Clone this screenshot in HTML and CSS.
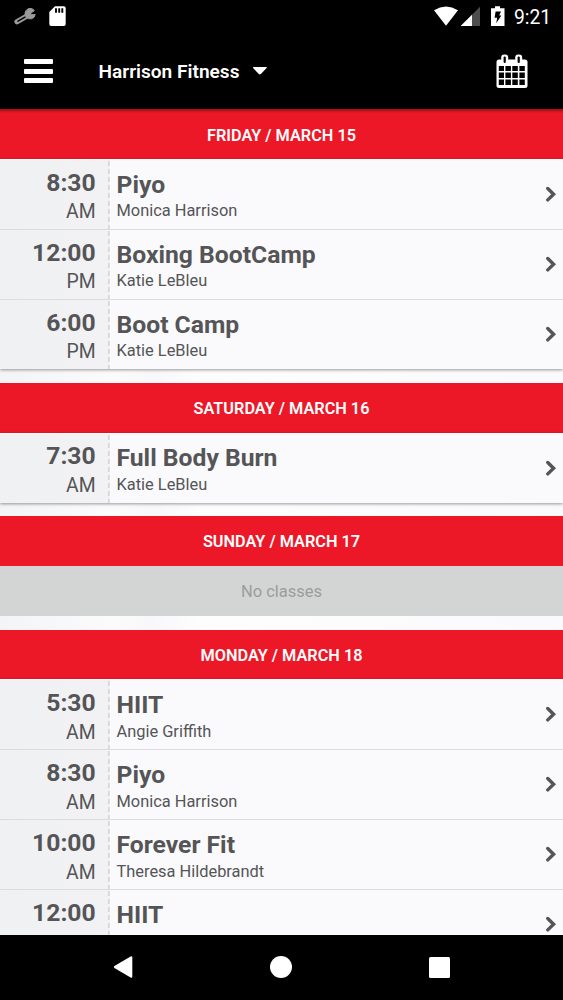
FILE: index.html
```
<!DOCTYPE html>
<html lang="en">
<head>
<meta charset="UTF-8">
<meta name="viewport" content="width=device-width, initial-scale=1.0">
<title>Harrison Fitness</title>
<link rel="stylesheet" href="styles.css">
</head>
<body>
    <!-- shared icon -->
    <svg class="defs" width="0" height="0">
        <symbol id="chevron" viewBox="0 0 12 16">
            <path d="M2.8 2.5L8.6 8.2L2.8 13.9" fill="none" stroke="#555557" stroke-width="3.4" stroke-linecap="round"/>
        </symbol>
    </svg>

    <div class="status-bar">
        <svg class="status-left" width="70" height="32" viewBox="0 0 70 32">
            <path d="M17 21.7L27 16" stroke="#9b9b9b" stroke-width="5.2" stroke-linecap="round"/>
            <path d="M34.4 10.6L30.7 13.2L31.2 14.7L35.2 14.5A5 5 0 0 1 26 16.6A5 5 0 0 1 34.4 10.6Z" fill="#9b9b9b" stroke="#9b9b9b" stroke-width="1" stroke-linejoin="round"/>
            <path d="M18 21.2L25 17.2" stroke="#000" stroke-width="1.5" stroke-linecap="round"/>
            <path d="M55 6.3H63.8Q65.7 6.3 65.7 8.2V24Q65.7 26 63.8 26H51.2Q49.3 26 49.3 24V12Z" fill="#fff"/>
            <path d="M56 8.3V12.7M59.2 8.3V12.7M62.3 8.3V12.7" stroke="#000" stroke-width="1.9"/>
        </svg>
        <svg class="status-right" width="74" height="32" viewBox="432 0 74 32">
            <path d="M434 10.2Q446 3 458 10.2L446 25.7Z" fill="#fff"/>
            <path d="M480 6.8V26H460.7Z" fill="#4d4d4d"/>
            <path d="M472 14.8V26H460.7Z" fill="#fff"/>
            <path d="M495 6.2H500V8.2H504.5V26H491V8.2H495Z" fill="#fff"/>
            <path d="M495.6 11.5H501L499.2 15.5H501.4L496.2 23.3L497.2 17.7H494.6Z" fill="#000"/>
        </svg>
        <span class="clock">9:21</span>
    </div>

    <header class="app-bar">
        <div class="menu"><span></span><span></span><span></span></div>
        <div class="location">Harrison Fitness
            <svg width="16" height="10" viewBox="0 0 16 10"><path d="M1.6 0H14.2Q15.2 .1 14.6 .9L8.9 7.1Q7.8 8 6.8 7.1L1.1 .9Q.6 .1 1.6 0Z" fill="#fff"/></svg>
        </div>
        <svg class="calendar" width="32" height="35" viewBox="0 0 32 35">
            <rect x=".5" y="5.5" width="31" height="28.5" rx="2.5" fill="#fff"/>
            <rect x="5.2" y=".6" width="7" height="10" rx="3" fill="#fff"/>
            <rect x="19.2" y=".6" width="7" height="10" rx="3" fill="#fff"/>
            <rect x="7.6" y="2.6" width="2.2" height="6.5" rx="1" fill="#000"/>
            <rect x="21.6" y="2.6" width="2.2" height="6.5" rx="1" fill="#000"/>
            <path d="M2.8 12H8V17H2.8ZM9.4 12H14.9V17H9.4ZM16.3 12H21.8V17H16.3ZM23.4 12H28.8V17H23.4ZM2.8 18.5H8V24H2.8ZM9.4 18.5H14.9V24H9.4ZM16.3 18.5H21.8V24H16.3ZM23.4 18.5H28.8V24H23.4ZM2.8 25.5H8V31H2.8ZM9.4 25.5H14.9V31H9.4ZM16.3 25.5H21.8V31H16.3ZM23.4 25.5H28.8V31H23.4Z" fill="#000"/>
        </svg>
    </header>

    <main class="schedule">
        <section class="day">
            <h2>FRIDAY / MARCH 15</h2>
            <ul class="classes">
                <li>
                    <div class="time"><b>8:30</b><span>AM</span></div>
                    <div class="info"><b>Piyo</b><span>Monica Harrison</span></div>
                    <svg class="chevron"><use href="#chevron"/></svg>
                </li>
                <li>
                    <div class="time"><b>12:00</b><span>PM</span></div>
                    <div class="info"><b>Boxing BootCamp</b><span>Katie LeBleu</span></div>
                    <svg class="chevron"><use href="#chevron"/></svg>
                </li>
                <li>
                    <div class="time"><b>6:00</b><span>PM</span></div>
                    <div class="info"><b>Boot Camp</b><span>Katie LeBleu</span></div>
                    <svg class="chevron"><use href="#chevron"/></svg>
                </li>
            </ul>
        </section>

        <section class="day">
            <h2>SATURDAY / MARCH 16</h2>
            <ul class="classes">
                <li>
                    <div class="time"><b>7:30</b><span>AM</span></div>
                    <div class="info"><b>Full Body Burn</b><span>Katie LeBleu</span></div>
                    <svg class="chevron"><use href="#chevron"/></svg>
                </li>
            </ul>
        </section>

        <section class="day">
            <h2>SUNDAY / MARCH 17</h2>
            <p class="empty">No classes</p>
        </section>

        <section class="day">
            <h2>MONDAY / MARCH 18</h2>
            <ul class="classes">
                <li>
                    <div class="time"><b>5:30</b><span>AM</span></div>
                    <div class="info"><b>HIIT</b><span>Angie Griffith</span></div>
                    <svg class="chevron"><use href="#chevron"/></svg>
                </li>
                <li>
                    <div class="time"><b>8:30</b><span>AM</span></div>
                    <div class="info"><b>Piyo</b><span>Monica Harrison</span></div>
                    <svg class="chevron"><use href="#chevron"/></svg>
                </li>
                <li>
                    <div class="time"><b>10:00</b><span>AM</span></div>
                    <div class="info"><b>Forever Fit</b><span>Theresa Hildebrandt</span></div>
                    <svg class="chevron"><use href="#chevron"/></svg>
                </li>
                <li>
                    <div class="time"><b>12:00</b></div>
                    <div class="info"><b>HIIT</b></div>
                    <svg class="chevron"><use href="#chevron"/></svg>
                </li>
            </ul>
        </section>
    </main>

    <nav class="nav-bar">
        <svg width="20" height="24" viewBox="0 0 20 24"><path d="M1.4 11L17.6 1.4Q19.3 .6 19.3 2.4V21.6Q19.3 23.4 17.6 22.5L1.4 13Q.2 12 1.4 11Z" fill="#fff"/></svg>
        <span class="home"></span>
        <span class="recent"></span>
    </nav>
</body>
</html>
```
FILE: styles.css
```
* {
    box-sizing: border-box;
}
body {
    margin: 0;
    height: 1000px;
    display: flex;
    flex-direction: column;
    overflow: hidden;
    background-color: #000;
    font-family: Roboto, sans-serif;
    color: #555557;
}
.defs {
    position: absolute;
}

/* top bars */
.status-bar {
    height: 33px;
    display: flex;
    flex-shrink: 0;
    color: #fff;
}
.status-right {
    margin-left: auto;
}
.clock {
    width: 57px;
    padding-left: 8px;
    font-size: 19.3px;
    line-height: 35px;
}
.app-bar {
    height: 76.4px;
    flex-shrink: 0;
    display: flex;
    align-items: center;
    padding: 0 35px 0 24px;
    color: #fff;
}
.menu {
    width: 28.5px;
    display: flex;
    flex-direction: column;
    gap: 4.5px;
}
.menu span {
    height: 5px;
    border-radius: 1px;
    background-color: #fff;
}
.location {
    margin-left: 46px;
    padding-top: 1px;
    display: flex;
    align-items: center;
    gap: 12.5px;
    font-size: 19.1px;
    font-weight: 600;
}
.calendar {
    margin-left: auto;
}

/* class list */
.schedule {
    flex: 1;
    min-height: 0;
    overflow: hidden;
    background: linear-gradient(90deg, #f3f4f6, #fbfbfc 20%, #f8f8fa 27%, #fdfdfe 36%, #fafafc);
}
.day {
    margin-bottom: 13.7px;
}
.day h2 {
    margin: 0;
    height: 49.8px;
    line-height: 52.6px;
    background-color: #ec1827;
    color: #fff;
    font-size: 16.3px;
    font-weight: 600;
    text-align: center;
}
.day:first-child h2 {
    line-height: 54px;
    background-image: linear-gradient(180deg, rgba(0, 0, 0, 0.35), transparent 4px);
}
.classes {
    margin: 0;
    padding: 0;
    list-style: none;
    background-color: #fafafc;
    box-shadow: 0 1px 3px rgba(0, 0, 0, 0.4);
}
.classes li {
    height: 70px;
    display: flex;
    box-shadow: inset 0 1px #dcdcde;
}
.classes li:first-child {
    box-shadow: none;
}
.classes b, .classes span {
    display: block;
    white-space: nowrap;
}
.classes b {
    font-size: 24.7px;
    line-height: 29.4px;
}
.time {
    width: 109.5px;
    margin-top: 1px;
    padding: 7.8px 13.8px 0 0;
    text-align: right;
    background: repeating-linear-gradient(180deg, transparent 0 1px, #d6d6d8 1px 6px, transparent 6px 8px) right / 1.6px 100% no-repeat, linear-gradient(90deg, #f0f1f3, #f2f2f4);
}
.time span {
    font-size: 19.4px;
    line-height: 30.2px;
}
.info {
    flex: 1;
    padding: 10.8px 0 0 7px;
}
.info span {
    font-size: 16.4px;
    line-height: 24.6px;
}
.chevron {
    width: 12px;
    height: 16px;
    margin: 27px 6px 0 0;
}
.empty {
    margin: 0;
    height: 49.8px;
    line-height: 52px;
    background-color: #d3d5d5;
    color: #9c9c9e;
    font-size: 16.5px;
    text-align: center;
}

/* system navigation */
.nav-bar {
    height: 65.5px;
    flex-shrink: 0;
    display: flex;
    align-items: center;
    justify-content: space-between;
    padding: 0 113px;
}
.home {
    width: 22px;
    height: 22px;
    border-radius: 50%;
    background-color: #fff;
}
.recent {
    width: 21px;
    height: 21px;
    border-radius: 1.5px;
    background-color: #fff;
}
```
